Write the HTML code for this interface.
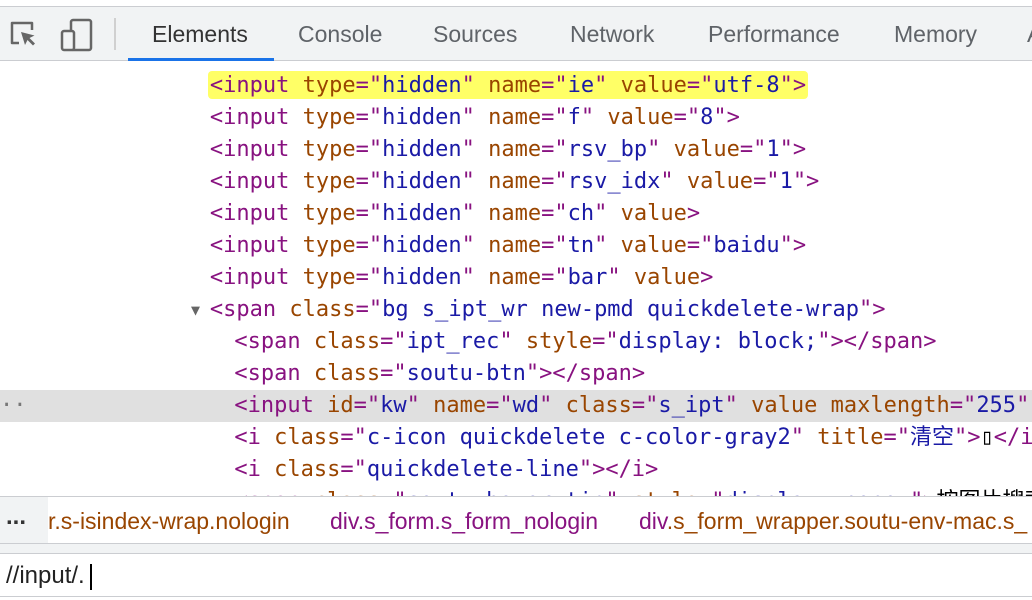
<!DOCTYPE html>
<html><head><meta charset="utf-8"><style>
*{margin:0;padding:0;box-sizing:border-box}
body{width:1032px;height:600px;overflow:hidden;background:#fff;position:relative;font-family:"Liberation Sans","Noto Sans CJK SC",sans-serif}
.top{position:absolute;left:0;top:6px;width:1032px;height:55px;background:#f1f3f4;border-top:1px solid #cbcdd1;border-bottom:1px solid #cbcdd1}
.tab{position:absolute;top:14px;font-size:23px;color:#5f6368}
.ul{position:absolute;left:128px;top:51px;width:146px;height:3px;background:#1a73e8}
.sep{position:absolute;left:114px;top:11px;width:2px;height:32px;background:#d0d0d0}
.code{position:absolute;left:0;top:70px;width:1032px;height:426px;overflow:hidden;font-family:"DejaVu Sans Mono","Liberation Mono","Noto Sans CJK SC",monospace;font-size:22px}
.l{height:32px;line-height:32px;position:relative;white-space:pre;left:-2px}
.c{left:-4px}
.t{color:#881280}.a{color:#994500}.v{color:#1a1aa6}
.hl{position:absolute;left:210px;top:1px;width:600px;height:28px;background:#ffff66;border-radius:4px}
.sel{background:#e0e0e0;left:0;padding-left:0}
.bc{position:absolute;left:0;top:496px;width:1032px;height:48px;border-top:1px solid #cbcdd1;border-bottom:1px solid #cbcdd1;background:#fff;font-size:23px;white-space:nowrap;overflow:hidden}
.gap{position:absolute;left:0;top:544px;width:1032px;height:10px;background:#f1f3f4;border-bottom:1px solid #cbcdd1}
.inp{position:absolute;left:0;top:555px;width:1032px;height:42px;background:#fff;border-bottom:1px solid #cbcdd1;font-size:24px;color:#222}
</style></head><body>
<div class="top">
<svg style="position:absolute;left:9px;top:13px" width="28" height="28" viewBox="0 0 28 28"><path d="M10 23H3V3h20v7" fill="none" stroke="#666" stroke-width="2.5" stroke-linejoin="round"/><path d="M12 12l4 13 2.5-5 5.5 5.5 2-2-5.5-5.5 5-2.5z" fill="#666"/></svg>
<svg style="position:absolute;left:60px;top:11px" width="34" height="34" viewBox="0 0 34 34"><rect x="11" y="2" width="20" height="30" rx="2" fill="none" stroke="#666" stroke-width="2.5"/><rect x="2" y="13" width="12" height="19" rx="2" fill="#f1f3f4" stroke="#666" stroke-width="2.5"/></svg>
<div class="sep"></div>
<div class="tab" style="left:152px;color:#333">Elements</div>
<div class="tab" style="left:298px">Console</div>
<div class="tab" style="left:433px">Sources</div>
<div class="tab" style="left:570px">Network</div>
<div class="tab" style="left:708px">Performance</div>
<div class="tab" style="left:894px">Memory</div>
<div class="tab" style="left:1027px">A</div>
<div class="ul"></div>
</div>
<div class="code"><div class="l"><div class="hl"></div><span style="position:relative">                <span class="t">&lt;input</span> <span class="a">type</span><span class="t">="</span><span class="v">hidden</span><span class="t">"</span> <span class="a">name</span><span class="t">="</span><span class="v">ie</span><span class="t">"</span> <span class="a">value</span><span class="t">="</span><span class="v">utf-8</span><span class="t">"&gt;</span></span></div><div class="l">                <span class="t">&lt;input</span> <span class="a">type</span><span class="t">="</span><span class="v">hidden</span><span class="t">"</span> <span class="a">name</span><span class="t">="</span><span class="v">f</span><span class="t">"</span> <span class="a">value</span><span class="t">="</span><span class="v">8</span><span class="t">"&gt;</span></div><div class="l">                <span class="t">&lt;input</span> <span class="a">type</span><span class="t">="</span><span class="v">hidden</span><span class="t">"</span> <span class="a">name</span><span class="t">="</span><span class="v">rsv_bp</span><span class="t">"</span> <span class="a">value</span><span class="t">="</span><span class="v">1</span><span class="t">"&gt;</span></div><div class="l">                <span class="t">&lt;input</span> <span class="a">type</span><span class="t">="</span><span class="v">hidden</span><span class="t">"</span> <span class="a">name</span><span class="t">="</span><span class="v">rsv_idx</span><span class="t">"</span> <span class="a">value</span><span class="t">="</span><span class="v">1</span><span class="t">"&gt;</span></div><div class="l">                <span class="t">&lt;input</span> <span class="a">type</span><span class="t">="</span><span class="v">hidden</span><span class="t">"</span> <span class="a">name</span><span class="t">="</span><span class="v">ch</span><span class="t">"</span> <span class="a">value</span><span class="t">&gt;</span></div><div class="l">                <span class="t">&lt;input</span> <span class="a">type</span><span class="t">="</span><span class="v">hidden</span><span class="t">"</span> <span class="a">name</span><span class="t">="</span><span class="v">tn</span><span class="t">"</span> <span class="a">value</span><span class="t">="</span><span class="v">baidu</span><span class="t">"&gt;</span></div><div class="l">                <span class="t">&lt;input</span> <span class="a">type</span><span class="t">="</span><span class="v">hidden</span><span class="t">"</span> <span class="a">name</span><span class="t">="</span><span class="v">bar</span><span class="t">"</span> <span class="a">value</span><span class="t">&gt;</span></div><div class="l"><span style="position:absolute;left:193px;top:0;color:#666;font-size:15px">▼</span>                <span class="t">&lt;span</span> <span class="a">class</span><span class="t">="</span><span class="v">bg s_ipt_wr new-pmd quickdelete-wrap</span><span class="t">"&gt;</span></div><div class="l c">                  <span class="t">&lt;span</span> <span class="a">class</span><span class="t">="</span><span class="v">ipt_rec</span><span class="t">"</span> <span class="a">style</span><span class="t">="</span><span class="v">display: block;</span><span class="t">"&gt;&lt;/span&gt;</span></div><div class="l c">                  <span class="t">&lt;span</span> <span class="a">class</span><span class="t">="</span><span class="v">soutu-btn</span><span class="t">"&gt;&lt;/span&gt;</span></div><div class="l sel"><span style="color:#777">··</span>                <span class="t" style="margin-left:-4px">&lt;input</span> <span class="a">id</span><span class="t">="</span><span class="v">kw</span><span class="t">"</span> <span class="a">name</span><span class="t">="</span><span class="v">wd</span><span class="t">"</span> <span class="a">class</span><span class="t">="</span><span class="v">s_ipt</span><span class="t">"</span> <span class="a">value</span> <span class="a">maxlength</span><span class="t">="</span><span class="v">255</span><span class="t">"</span></div><div class="l c">                  <span class="t">&lt;i</span> <span class="a">class</span><span class="t">="</span><span class="v">c-icon quickdelete c-color-gray2</span><span class="t">"</span> <span class="a">title</span><span class="t">="</span><span class="v">清空</span><span class="t">"&gt;</span>▯<span class="t">&lt;/i&gt;</span></div><div class="l c">                  <span class="t">&lt;i</span> <span class="a">class</span><span class="t">="</span><span class="v">quickdelete-line</span><span class="t">"&gt;&lt;/i&gt;</span></div><div class="l c">                  <span class="t">&lt;span</span> <span class="a">class</span><span class="t">="</span><span class="v">soutu-hover-tip</span><span class="t">"</span> <span class="a">style</span><span class="t">="</span><span class="v">display: none;</span><span class="t">"&gt;</span>按图片搜索</div></div>
<div class="bc">
<div style="position:absolute;left:0;top:0;width:48px;height:46px;background:#f1f3f4;color:#333;font-size:24px;font-weight:bold;line-height:40px;padding-left:6px">...</div>
<div style="position:absolute;left:48px;top:11px;color:#994500">r.s-isindex-wrap.nologin</div>
<div style="position:absolute;left:330px;top:11px;color:#881280">div.s_form.s_form_nologin</div>
<div style="position:absolute;left:639px;top:11px"><span style="color:#881280">div</span><span style="color:#994500">.s_form_wrapper.soutu-env-mac.s_</span></div>
</div>
<div class="gap"></div>
<div class="inp"><span style="position:absolute;left:6px;top:7px">//input/.</span><span style="position:absolute;left:90px;top:9px;width:2px;height:26px;background:#000"></span></div>
</body></html>
